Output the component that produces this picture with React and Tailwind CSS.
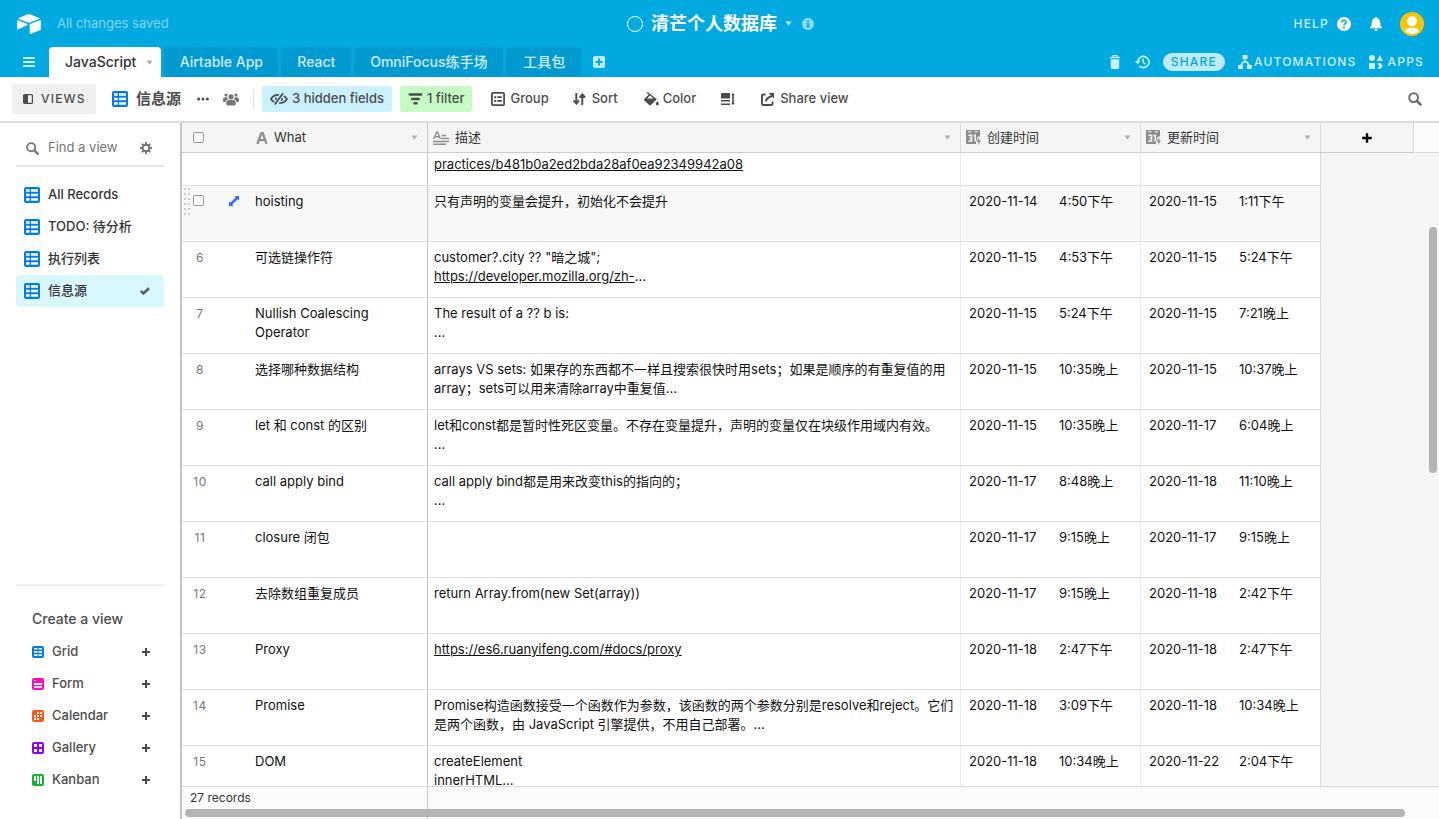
import React, { useState } from 'react';

const GridIcon = ({ className }) => (
  <svg viewBox="0 0 16 16" className={className} aria-hidden="true">
    <rect width="16" height="16" rx="2" fill="#007ce0" />
    <path fill="#fff" d="M2 2.3h3.7v2.4H2zM7 2.3h7v2.4H7zM2 6.8h3.7v2.4H2zM7 6.8h7v2.4H7zM2 11.3h3.7v2.4H2zM7 11.3h7v2.4H7z" />
  </svg>
);

const SmallGridIcon = () => (
  <svg viewBox="0 0 12 12" className="w-3 h-3" aria-hidden="true">
    <rect width="12" height="12" rx="2" fill="#007ce0" />
    <path fill="#fff" d="M2 2h3.5v1.6H2zM6.5 2H10v1.6H6.5zM2 5h3.5v1.8H2zM6.5 5H10v1.8H6.5zM2 8.2h3.5V10H2zM6.5 8.2H10V10H6.5z" />
  </svg>
);

const FormIcon = () => (
  <svg viewBox="0 0 12 12" className="w-3 h-3" aria-hidden="true">
    <rect width="12" height="12" rx="2" fill="#ff08c2" />
    <path fill="#fff" d="M2 2h2v1H2zM2 5h8v2H2zM2 8.2h8v1.8H2z" />
  </svg>
);

const CalendarIcon = () => (
  <svg viewBox="0 0 12 12" className="w-3 h-3" aria-hidden="true">
    <rect width="12" height="12" rx="2" fill="#ff5714" />
    <path fill="#fff" d="M5 2.2h2v1.8H5zM8 2.2h2v1.8H8zM2 5h2v2H2zM5 5h2v2H5zM8 5h2v2H8zM2 8h2v2H2zM5 8h2v2H5z" />
  </svg>
);

const GalleryIcon = () => (
  <svg viewBox="0 0 12 12" className="w-3 h-3" aria-hidden="true">
    <rect width="12" height="12" rx="2" fill="#8f00f2" />
    <path fill="#fff" d="M2 2h3v3H2zM7 2h3v3H7zM2 7h3v3H2zM7 7h3v3H7z" />
  </svg>
);

const KanbanIcon = () => (
  <svg viewBox="0 0 12 12" className="w-3 h-3" aria-hidden="true">
    <rect width="12" height="12" rx="2" fill="#0bb82e" />
    <path fill="#fff" d="M2 2h2v5H2zM5 2h2v8H5zM8 2h2v8H8z" />
  </svg>
);

const SearchIcon = ({ className }) => (
  <svg viewBox="0 0 14 14" className={className} fill="none" stroke="currentColor" aria-hidden="true">
    <circle cx="5.6" cy="5.6" r="4.4" strokeWidth="2" />
    <path d="M9 9l3.6 3.6" strokeWidth="2.6" strokeLinecap="round" />
  </svg>
);

const Caret = ({ className }) => (
  <svg viewBox="0 0 6 5" className={className} fill="currentColor" aria-hidden="true">
    <path d="M0 .5h6L3 4.7z" />
  </svg>
);

const Plus = ({ className }) => (
  <svg viewBox="0 0 10 10" className={className} stroke="currentColor" strokeWidth="2" aria-hidden="true">
    <path d="M5 1v8M1 5h8" />
  </svg>
);

const TextFieldIcon = () => (
  <svg viewBox="0 0 12 12" className="w-3 h-3 text-[#909090]" fill="none" stroke="currentColor" aria-hidden="true">
    <path d="M1.4 12L5.3 1h1.4l3.9 11M3 8.2h6" strokeWidth="2.3" />
  </svg>
);

const LongTextIcon = () => (
  <svg viewBox="0 0 16 14" className="w-4 h-3.5 text-[#909090]" fill="none" stroke="currentColor" aria-hidden="true">
    <path d="M.8 8L3.7 1h.8l2.900 7M2 5.800h4.200" strokeWidth="1.400" />
    <path d="M8.500 4.500H13M8.500 7.500H16M0 10.500h16M0 13.300h13" strokeWidth="1.400" />
  </svg>
);

// calendar page with a small bolt for computed dates
const AutoDateIcon = () => (
  <svg viewBox="0 0 15 15" className="w-[15px] h-[15px]" aria-hidden="true">
    <path fill="#8c8c8c" d="M1 0h12a1 1 0 011 1v6.5h-3V14H1a1 1 0 01-1-1V1a1 1 0 011-1z" />
    <path fill="#f5f5f5" d="M2 1.2h3.5v1H2zM8.5 1.2H12v1H8.5z" />
    <path fill="none" stroke="#f5f5f5" strokeWidth="1.5" d="M2.400 5.300h3.200v2.700H3.400M5.600 8v2.900H2.200M7.600 5.900l1.600-.7v6.300" />
    <path fill="#f5f5f5" d="M12.200 6.500H15V15h-5v-3.500z" />
    <path fill="#8c8c8c" d="M13.400 7.300l-3 4.400h1.900v3.300l2.700-4.400h-1.800z" />
  </svg>
);

const tabs = [
  { name: 'Airtable App', width: 'w-[114px]' },
  { name: 'React', width: 'w-[70px]' },
  { name: 'OmniFocus练手场', width: 'w-[149px]' },
  { name: '工具包', width: 'w-[76px]' },
];

const views = ['All Records', 'TODO: 待分析', '执行列表', '信息源'];

const viewTypes = [
  { name: 'Grid', Icon: SmallGridIcon },
  { name: 'Form', Icon: FormIcon },
  { name: 'Calendar', Icon: CalendarIcon },
  { name: 'Gallery', Icon: GalleryIcon },
  { name: 'Kanban', Icon: KanbanIcon },
];

const records = [
  { id: 5, hover: true, what: ['hoisting'], desc: ['只有声明的变量会提升，初始化不会提升'], created: ['2020-11-14', '4:50下午'], updated: ['2020-11-15', '1:11下午'] },
  { id: 6, what: ['可选链操作符'], desc: ['customer?.city ?? "暗之城";'], link: 'https://developer.mozilla.org/zh-', more: '...', created: ['2020-11-15', '4:53下午'], updated: ['2020-11-15', '5:24下午'] },
  { id: 7, what: ['Nullish Coalescing', 'Operator'], desc: ['The result of a ?? b is:', '...'], created: ['2020-11-15', '5:24下午'], updated: ['2020-11-15', '7:21晚上'] },
  { id: 8, what: ['选择哪种数据结构'], desc: ['arrays VS sets: 如果存的东西都不一样且搜索很快时用sets；如果是顺序的有重复值的用', 'array；sets可以用来清除array中重复值...'], created: ['2020-11-15', '10:35晚上'], updated: ['2020-11-15', '10:37晚上'] },
  { id: 9, what: ['let 和 const 的区别'], desc: ['let和const都是暂时性死区变量。不存在变量提升，声明的变量仅在块级作用域内有效。', '...'], created: ['2020-11-15', '10:35晚上'], updated: ['2020-11-17', '6:04晚上'] },
  { id: 10, what: ['call apply bind'], desc: ['call apply bind都是用来改变this的指向的；', '...'], created: ['2020-11-17', '8:48晚上'], updated: ['2020-11-18', '11:10晚上'] },
  { id: 11, what: ['closure 闭包'], desc: [], created: ['2020-11-17', '9:15晚上'], updated: ['2020-11-17', '9:15晚上'] },
  { id: 12, what: ['去除数组重复成员'], desc: ['return Array.from(new Set(array))'], created: ['2020-11-17', '9:15晚上'], updated: ['2020-11-18', '2:42下午'] },
  { id: 13, what: ['Proxy'], desc: [], link: 'https://es6.ruanyifeng.com/#docs/proxy', created: ['2020-11-18', '2:47下午'], updated: ['2020-11-18', '2:47下午'] },
  { id: 14, what: ['Promise'], desc: ['Promise构造函数接受一个函数作为参数，该函数的两个参数分别是resolve和reject。它们', '是两个函数，由 JavaScript 引擎提供，不用自己部署。...'], created: ['2020-11-18', '3:09下午'], updated: ['2020-11-18', '10:34晚上'] },
  { id: 15, what: ['DOM'], desc: ['createElement', 'innerHTML...'], created: ['2020-11-18', '10:34晚上'], updated: ['2020-11-22', '2:04下午'] },
];

const TopBar = () => (
  <header className="bg-[#00aae0] text-white shrink-0">
    <div className="h-[47px] grid grid-cols-[1fr_auto_1fr] items-center pl-[17px] pr-[15px]">
      <div className="flex items-center gap-4">
        <a href="#home" aria-label="Home">
          <svg viewBox="11 10 178 149" className="w-6 h-5" fill="currentColor" aria-hidden="true">
            <path d="M90.039 12.368L24.08 39.66c-3.668 1.519-3.63 6.729.061 8.192l66.235 26.266a24.58 24.58 0 0018.12 0l66.236-26.266c3.69-1.463 3.729-6.673.06-8.191l-65.958-27.293a24.58 24.58 0 00-18.795 0" />
            <path d="M105.312 88.46v65.617c0 3.121 3.147 5.258 6.048 4.108l73.806-28.648a4.418 4.418 0 002.79-4.108V59.813c0-3.121-3.147-5.258-6.048-4.108l-73.806 28.648a4.42 4.42 0 00-2.79 4.108" />
            <path d="M88.078 91.846l-21.904 10.576-2.224 1.075-46.238 22.155c-2.93 1.414-6.672-.722-6.672-3.978V60.088c0-1.178.604-2.195 1.414-2.96a5.02 5.02 0 011.12-.84c1.104-.663 2.68-.84 4.02-.31L87.71 83.76c3.564 1.414 3.844 6.408.368 8.087" />
          </svg>
        </a>
        <span className="text-[13px] text-white/50">All changes saved</span>
      </div>
      <div className="flex items-center">
        <span className="w-4 h-4 rounded-full border border-white mr-2"></span>
        <h1 className="text-lg font-bold">清芒个人数据库</h1>
        <Caret className="w-[7px] h-[5px] ml-2 text-white/80" />
        <svg viewBox="0 0 12 12" className="w-3 h-3 ml-2.5" aria-hidden="true">
          <circle cx="6" cy="6" r="6" fill="#fff" fillOpacity=".55" />
          <path fill="#00aae0" d="M5 2h2v1.6H5zM4.4 4.7H7v3.8h.8v1H4.3v-1h.8V5.7h-.7z" />
        </svg>
      </div>
      <div className="flex items-center justify-end">
        <a href="#help" className="flex items-center gap-2 text-xs font-medium tracking-widest text-white/80">
          HELP
          <svg viewBox="0 0 14 14" className="w-3.5 h-3.5" aria-hidden="true">
            <circle cx="7" cy="7" r="7" fill="#fff" />
            <path d="M4.8 5.5c0-3 4.5-2.7 4.3-.2C9 6.700 7 6.700 7 8.400" fill="none" stroke="#00aae0" strokeWidth="1.5" />
            <circle cx="7" cy="10.500" r="1" fill="#00aae0" />
          </svg>
        </a>
        <button aria-label="Notifications" className="ml-[19px]">
          <svg viewBox="0 0 12 14" className="w-3 h-3.5" fill="currentColor" aria-hidden="true">
            <path d="M6 0c.7 0 1 .4 1 1 2 .5 3.200 2.200 3.200 4.300 0 2.900.5 3.700 1.500 4.600.6.600.3 1.400-.5 1.400H.8c-.8 0-1.100-.8-.5-1.400 1-.9 1.500-1.700 1.500-4.600C1.800 3.200 3 1.500 5 1c0-.6.300-1 1-1zM4.400 12.200h3.200C7.500 13.300 6.900 14 6 14s-1.500-.7-1.600-1.800z" />
          </svg>
        </button>
        <button aria-label="Account" className="ml-[18px]">
          <svg viewBox="0 0 24 24" className="w-6 h-6" aria-hidden="true">
            <circle cx="12" cy="12" r="12" fill="#fcc400" />
            <circle cx="12" cy="9.200" r="5" fill="#fff" />
            <path d="M5 19.200c0-4.600 14-4.600 14 0a10 10 0 01-14 0z" fill="#fff" />
          </svg>
        </button>
      </div>
    </div>

    <div className="h-[30px] flex items-center pl-[23px] pr-[15px]">
      <button aria-label="Menu" className="w-3 mr-3.5">
        <svg viewBox="0 0 12 10" className="w-3 h-2.5" fill="#fff" fillOpacity=".8" aria-hidden="true">
          <path d="M0 0h12v2H0zM0 4h12v2H0zM0 8h12v2H0z" />
        </svg>
      </button>
      <nav className="flex gap-[3px] h-full text-sm">
        <button className="flex items-center gap-2.5 rounded-t bg-white pl-4 pr-2 font-medium text-[#333]">
          JavaScript
          <Caret className="w-[7px] h-[5px] text-[#aaa]" />
        </button>
        {tabs.map(({ name, width }) => (
          <button key={name} className={`rounded-t bg-[#009ad0] font-medium text-white/80 ${width}`}>
            {name}
          </button>
        ))}
      </nav>
      <button aria-label="Add table" className="ml-[11px]">
        <svg viewBox="0 0 12 12" className="w-3 h-3" aria-hidden="true">
          <rect width="12" height="12" rx="2" fill="#bfeaf7" />
          <path d="M6 2.500v7M2.500 6h7" stroke="#00aae0" strokeWidth="2" />
        </svg>
      </button>
      <div className="ml-auto flex items-center text-xs font-medium tracking-widest text-white/80">
        <button aria-label="Trash">
          <svg viewBox="0 0 10 14" className="w-2.5 h-3.5" fill="currentColor" aria-hidden="true">
            <path d="M2.500 0h5v1.800H10v1.400H0V1.800h2.500zM3.700 1v.8h2.600V1zM.8 4.300h8.400v8.200c0 .9-.6 1.500-1.500 1.500H2.300c-.9 0-1.500-.6-1.500-1.500z" fillRule="evenodd" />
          </svg>
        </button>
        <button aria-label="History" className="ml-[15px]">
          <svg viewBox="0 0 15 14" className="w-[15px] h-3.5" aria-hidden="true">
            <path d="M2.800 7a5.600 5.600 0 111.600 4" fill="none" stroke="currentColor" strokeWidth="1.700" />
            <path d="M0 6h5.400L2.700 9.300z" fill="currentColor" />
            <path d="M8.200 3.800v3.400l2.200 2" fill="none" stroke="currentColor" strokeWidth="1.500" />
          </svg>
        </button>
        <button className="ml-[13px] h-[18px] rounded-full bg-[#bfeaf7] px-2 tracking-widest text-[#00aae0]">SHARE</button>
        <button className="ml-[13px] flex items-center gap-0.5 tracking-widest">
          <svg viewBox="0 0 14 14" className="w-3.5 h-3.5" fill="currentColor" aria-hidden="true">
            <path d="M4.500 0h5v4h-5zM0 10h5v4H0zM9 10h5v4H9z" />
            <path d="M7 3v4M2.500 11L5 7h4l2.500 4" fill="none" stroke="currentColor" strokeWidth="1.500" />
          </svg>
          AUTOMATIONS
        </button>
        <button className="ml-3 flex items-center gap-[5px] tracking-widest">
          <svg viewBox="0 0 14 14" className="w-3.5 h-3.5" fill="currentColor" aria-hidden="true">
            <circle cx="3" cy="3" r="3" />
            <path d="M10.800 0L14 6H7.600zM0 8h6v6H0zM8 8.300h3.600l2.200 2.700-2.200 2.700H8.300l2-2.700z" />
          </svg>
          APPS
        </button>
      </div>
    </div>
  </header>
);

const Toolbar = () => (
  <div className="h-[46px] shrink-0 flex items-center border-b-2 border-[#ddd] bg-white pl-3 pr-[17px] text-[13px] font-medium text-[#4c4c4c]">
    <button className="h-[30px] w-[84px] flex items-center gap-2 rounded-[3px] bg-[#f0f0f0] pl-[11px] text-xs tracking-widest">
      <svg viewBox="0 0 10 10" className="w-2.5 h-2.5" aria-hidden="true">
        <rect x=".6" y=".6" width="8.800" height="8.800" rx="1" fill="none" stroke="#4c4c4c" strokeWidth="1.200" />
        <path d="M1 1h4v8H1z" fill="#4c4c4c" />
      </svg>
      VIEWS
    </button>
    <button className="ml-4 flex items-center gap-2 text-[15px] font-bold">
      <GridIcon className="w-4 h-4" />
      信息源
    </button>
    <button aria-label="View options" className="ml-4">
      <svg viewBox="0 0 12 4" className="w-3 h-1" fill="currentColor" aria-hidden="true">
        <circle cx="1.600" cy="2" r="1.500" />
        <circle cx="6" cy="2" r="1.500" />
        <circle cx="10.400" cy="2" r="1.500" />
      </svg>
    </button>
    <button aria-label="Collaborators" className="ml-3.5">
      <svg viewBox="0 0 16 13" className="w-4 h-[13px]" fill="#777" aria-hidden="true">
        <circle cx="8" cy="3.800" r="2.600" />
        <circle cx="3" cy="2" r="1.600" />
        <circle cx="13" cy="2" r="1.600" />
        <path d="M3.200 10.500C3.200 8 4.500 7 6 7h4c1.500 0 2.800 1 2.800 3.500 0 1.600-1 2-2 2H5.200c-1 0-2-.4-2-2zM0 7c0-2 .9-2.800 2-2.800h2.300c0 1 .4 1.700.9 2.200C3.600 6.800 2.800 7.500 2.500 9H1C.3 9 0 8.500 0 7zM16 7c0-2-.9-2.800-2-2.800h-2.300c0 1-.4 1.700-.9 2.200 1.600.4 2.400 1.100 2.700 2.600H15c.7 0 1-.5 1-2z" />
      </svg>
    </button>
    <span className="ml-3.5 mr-2 w-px h-5 bg-[#e2e2e2]"></span>
    <button className="h-[26px] flex items-center gap-1 rounded-[3px] bg-[#c9f1ff] px-2">
      <svg viewBox="0 0 18 14" className="w-[18px] h-3.5" fill="none" stroke="currentColor" aria-hidden="true">
        <path d="M4.800 12.500L13 1.200" strokeWidth="1.800" />
        <path d="M9 3C5.500 2.700 2.500 4.500 1 7c.8 1.400 1.900 2.400 3.300 3.100M6.300 5.500A3 3 0 006 8M9 11c3.500.2 6.500-1.500 8-4-.8-1.400-1.900-2.400-3.300-3.100M11.800 6c.4 1 .200 2-.5 2.800" strokeWidth="1.700" />
      </svg>
      3 hidden fields
    </button>
    <button className="ml-2 h-[26px] flex items-center gap-1 rounded-[3px] bg-[#c4fcc4] px-2">
      <svg viewBox="0 0 15 12" className="w-[15px] h-3" fill="none" stroke="currentColor" strokeWidth="2.400" strokeLinecap="round" aria-hidden="true">
        <path d="M1.800 1.500h11.400M4.200 6h6.600M6.400 10.300h2.200" />
      </svg>
      1 filter
    </button>
    <button className="ml-[19px] flex items-center gap-[5px]">
      <svg viewBox="0 0 14 14" className="w-3.5 h-3.5" aria-hidden="true">
        <rect x=".9" y=".9" width="12.200" height="12.200" rx="1" fill="none" stroke="currentColor" strokeWidth="1.800" />
        <path d="M3.200 4.200h2v2h-2zM6.300 4.200h4.500v1.800H6.300zM3.200 8h2v2h-2zM6.300 8h4.500v1.800H6.300z" fill="currentColor" />
      </svg>
      Group
    </button>
    <button className="ml-6 flex items-center gap-1.5">
      <svg viewBox="0 0 13 12" className="w-[13px] h-3" fill="none" stroke="currentColor" strokeWidth="1.900" aria-hidden="true">
        <path d="M3.300 0v10M.6 7.500l2.700 3 2.700-3M9.300 12V2M6.600 4.500l2.700-3 2.700 3" />
      </svg>
      Sort
    </button>
    <button className="ml-[26px] flex items-center gap-1">
      <svg viewBox="0 0 15 14" className="w-[15px] h-3.5" fill="currentColor" aria-hidden="true">
        <path fillRule="evenodd" d="M2.600.9l1-.9 9.300 7.200-6 5.900c-.6.500-1.200.5-1.700 0L.4 8.400c-.5-.5-.5-1.100 0-1.600L4.800 2.500zM6 3.600L3 6.500h6.500z" />
        <path d="M13.300 9c.9 1.300 1.500 2.100 1.500 2.900 0 1.900-2.900 1.900-2.900 0 0-.8.500-1.600 1.400-2.900z" />
      </svg>
      Color
    </button>
    <button aria-label="Row height" className="ml-[25px]">
      <svg viewBox="0 0 14 12" className="w-3.5 h-3" fill="currentColor" aria-hidden="true">
        <path d="M0 0h9v5.600H0zM0 7h9v1.500H0zM0 10.500h9V12H0zM10.200 2.200L12 0l1.800 2.200h-1v7.600h1L12 12l-1.800-2.200h1V2.200z" />
      </svg>
    </button>
    <button className="ml-[26px] flex items-center gap-1.5">
      <svg viewBox="0 0 13 13" className="w-[13px] h-[13px]" fill="none" stroke="currentColor" strokeWidth="1.900" aria-hidden="true">
        <path d="M4.500 1.500H2a1 1 0 00-1 1V11a1 1 0 001 1h8.500a1 1 0 001-1V8.500M5 8.500C5 6 7 4.200 11 3" />
        <path d="M7.500 0H13v5.500z" fill="currentColor" stroke="none" />
      </svg>
      Share view
    </button>
    <button aria-label="Search records" className="ml-auto text-[#6f6f6f]">
      <SearchIcon className="w-3.5 h-3.5" />
    </button>
  </div>
);

const Sidebar = () => {
  const [query, setQuery] = useState('');
  const [active, setActive] = useState('信息源');

  return (
    <aside className="w-[182px] shrink-0 flex flex-col border-r-2 border-[#c4c4c4] bg-white px-4 text-[13px] font-medium">
      <div className="mt-2 h-9 flex items-center border-b-2 border-[#e6e6e6] pl-2.5 pr-3 text-[#777]">
        <SearchIcon className="w-[13px] h-[13px] shrink-0" />
        <input
          aria-label="Find a view"
          placeholder="Find a view"
          value={query}
          onChange={(e) => setQuery(e.target.value)}
          className="ml-[9px] w-full min-w-0 font-normal outline-none placeholder:text-[#757575]"
        />
        <button aria-label="Sidebar settings">
          <svg viewBox="0 0 12 12" className="w-3 h-3" fill="none" stroke="currentColor" aria-hidden="true">
            <circle cx="6" cy="6" r="3.300" strokeWidth="2" />
            <path d="M6 0v2.500M6 9.500V12M0 6h2.500M9.500 6H12M1.800 1.800l1.700 1.700M8.500 8.500l1.700 1.700M10.200 1.800L8.500 3.500M3.500 8.500l-1.700 1.700" strokeWidth="1.900" />
          </svg>
        </button>
      </div>

      <nav className="mt-3 flex flex-col text-[#333]">
        {views.map((view) => (
          <button
            key={view}
            onClick={() => setActive(view)}
            className={`h-8 flex items-center gap-2 rounded-[3px] pl-2 pr-3.5 ${view === active ? 'bg-[#d9f7ff]' : ''}`}
          >
            <GridIcon className="w-4 h-4" />
            {view}
            {view === active && (
              <svg viewBox="0 0 10 8" className="ml-auto w-2.5 h-2" fill="none" stroke="#5c5c5c" strokeWidth="2.600" aria-hidden="true">
                <path d="M.9 4l2.500 2.400L9 1.200" />
              </svg>
            )}
          </button>
        ))}
      </nav>

      <div className="mt-auto border-t-2 border-[#f0f0f0] pl-4 pr-[13px] pt-[22px] pb-[23px] text-[#4c4c4c]">
        <h2 className="mb-1.5 text-sm leading-[22px]">Create a view</h2>
        {viewTypes.map(({ name, Icon }) => (
          <button key={name} className="h-8 w-full flex items-center gap-2">
            <Icon />
            {name}
            <Plus className="ml-auto w-2.5 h-2.5" />
          </button>
        ))}
      </div>
    </aside>
  );
};

const HeaderCell = ({ icon, label, className }) => (
  <th className={`border-r border-b border-b-[#ccc] bg-[#f5f5f5] font-normal ${className}`}>
    <div className="flex items-center gap-1.5 pr-[9px] text-[#333]">
      {icon}
      {label}
      <Caret className="ml-auto w-[7px] h-[5px] text-[#b0b0b0]" />
    </div>
  </th>
);

const DateCell = ({ value, className }) => (
  <td className={`border-r border-b border-b-[#dde1e3] pl-2 pt-1.5 ${className}`}>
    <div className="flex">
      <span className="w-[90px]">{value[0]}</span>
      <span>{value[1]}</span>
    </div>
  </td>
);

const Row = ({ record }) => (
  <tr className={`h-14 align-top ${record.hover ? 'bg-[#f8f8f8]' : 'bg-white'}`}>
    <td className="border-b border-[#dde1e3]">
      {record.hover ? (
        <div className="flex items-start pl-0.5 pt-0.5">
          <svg viewBox="0 0 6 28" className="w-1.5 h-7" fill="#ccc" aria-hidden="true">
            <path d="M0 0h2v2H0zM4 0h2v2H4zM0 5h2v2H0zM4 5h2v2H4zM0 10h2v2H0zM4 10h2v2H4zM0 15h2v2H0zM4 15h2v2H4zM0 20h2v2H0zM4 20h2v2H4zM0 25h2v2H0zM4 25h2v2H4z" />
          </svg>
          <input type="checkbox" aria-label="Select record" className="ml-[3px] mt-[7px] w-[11px] h-[11px] appearance-none rounded-[2px] border border-[#999] bg-white" />
          <button aria-label="Expand record" className="ml-[25px] mt-2 text-[#2d6bff]">
            <svg viewBox="0 0 10 10" className="w-2.5 h-2.5" fill="currentColor" aria-hidden="true">
              <path d="M5.500 0H10v4.500L8.600 3.200 3.200 8.600 4.500 10H0V5.500l1.400 1.300 5.400-5.400z" />
            </svg>
          </button>
        </div>
      ) : (
        <div className="w-9 pt-1.5 text-center text-xs leading-[19px] tracking-wider text-[#777]">{record.id}</div>
      )}
    </td>
    <td className="border-r border-b border-r-[#c4c4c4] border-b-[#dde1e3] pl-[7px] pt-1.5">
      {record.what.map((line) => (
        <div key={line}>{line}</div>
      ))}
    </td>
    <td className="border-r border-b border-r-[#ececec] border-b-[#dde1e3] pl-1.5 pt-1.5 whitespace-nowrap">
      {record.desc.map((line) => (
        <div key={line}>{line}</div>
      ))}
      {record.link && (
        <div>
          <a href={record.link} className="underline">{record.link}</a>
          {record.more}
        </div>
      )}
    </td>
    <DateCell value={record.created} className="border-r-[#ececec]" />
    <DateCell value={record.updated} className="border-r-[#d5dbde]" />
    <td colSpan={2} className="bg-[#f5f5f5]"></td>
  </tr>
);

const GridView = () => (
  <main className="relative flex-1 min-w-0 flex flex-col bg-[#f5f5f5]">
    <div className="flex-1 min-h-0 overflow-hidden">
      <table className="w-full table-fixed border-separate border-spacing-0 text-left text-[13px] leading-[19px] text-[#111]">
        <colgroup>
          <col className="w-[66px]" />
          <col className="w-[180px]" />
          <col className="w-[533px]" />
          <col className="w-[180px]" />
          <col className="w-[180px]" />
          <col className="w-[93px]" />
          <col />
        </colgroup>
        <thead>
          <tr className="h-[30px]">
            <th className="border-b border-[#ccc] bg-[#f5f5f5] pl-[11px]">
              <input type="checkbox" aria-label="Select all records" className="block w-[11px] h-[11px] appearance-none rounded-[2px] border border-[#999] bg-white" />
            </th>
            <HeaderCell icon={<TextFieldIcon />} label="What" className="border-r-[#c4c4c4] pl-2" />
            <HeaderCell icon={<LongTextIcon />} label="描述" className="border-r-[#d5dbde] pl-[5px]" />
            <HeaderCell icon={<AutoDateIcon />} label="创建时间" className="border-r-[#d5dbde] pl-[5px]" />
            <HeaderCell icon={<AutoDateIcon />} label="更新时间" className="border-r-[#d5dbde] pl-[5px]" />
            <th className="border-r border-b border-r-[#d5dbde] border-b-[#ccc] bg-[#f5f5f5]">
              <button aria-label="Add field" className="mx-auto block text-black">
                <Plus className="w-3 h-3" />
              </button>
            </th>
            <th className="border-b border-[#dde1e3] bg-[#fbfbfb]"></th>
          </tr>
        </thead>
        <tbody>
          {/* tail of the record scrolled under the header */}
          <tr className="h-[33px] bg-white align-top">
            <td className="border-b border-[#dde1e3]"></td>
            <td className="border-r border-b border-r-[#c4c4c4] border-b-[#dde1e3]"></td>
            <td className="border-r border-b border-r-[#ececec] border-b-[#dde1e3] pl-1.5 pt-0.5">
              <a href="#practices" className="underline">practices/b481b0a2ed2bda28af0ea92349942a08</a>
            </td>
            <td className="border-r border-b border-r-[#ececec] border-b-[#dde1e3]"></td>
            <td className="border-r border-b border-r-[#d5dbde] border-b-[#dde1e3]"></td>
            <td colSpan={2} className="bg-[#f5f5f5]"></td>
          </tr>
          {records.map((record) => (
            <Row key={record.id} record={record} />
          ))}
        </tbody>
      </table>
    </div>

    <footer className="h-[33px] shrink-0 flex border-t border-[#d5dbde] bg-[#fbfbfb] text-xs text-[#333]">
      <div className="w-[246px] border-r border-[#c4c4c4] pl-2 pt-[3px]">27 records</div>
    </footer>

    <div className="absolute bottom-0.5 left-[3px] right-[34px] h-2 rounded-full bg-[#b4b4b4]"></div>
    <div className="absolute top-[104px] right-0.5 h-[246px] w-2 rounded-full bg-[#b4b4b4]"></div>
  </main>
);

const App = () => (
  <div className="h-screen flex flex-col overflow-hidden bg-white font-['Inter','Noto_Sans_CJK_SC',sans-serif]">
    <TopBar />
    <Toolbar />
    <div className="flex flex-1 min-h-0">
      <Sidebar />
      <GridView />
    </div>
  </div>
);

export default App;
